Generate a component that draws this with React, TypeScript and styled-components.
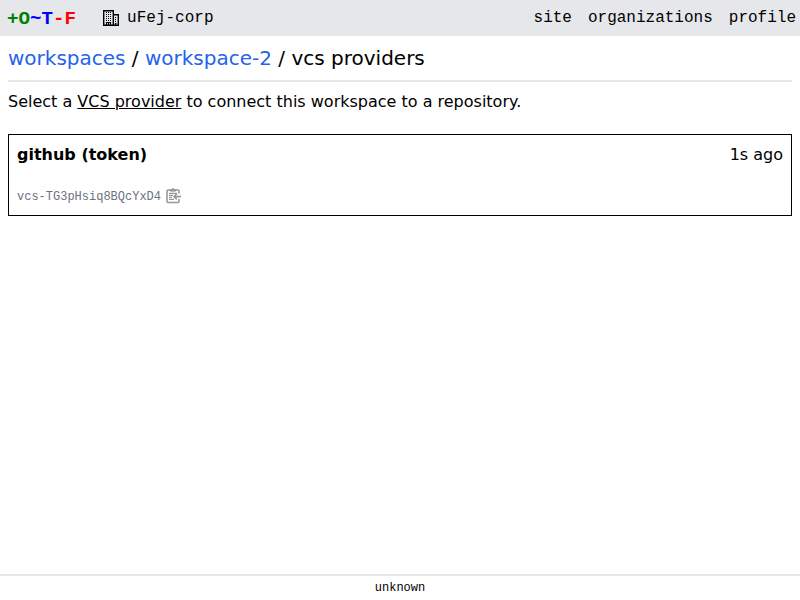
import React from "react";
import styled, { createGlobalStyle } from "styled-components";

const Global = createGlobalStyle`
  *, *::before, *::after { box-sizing: border-box; }
  body { margin: 0; background: #fff; color: #000; font-family: "DejaVu Sans", sans-serif; font-size: 16px; line-height: 24px; }
`;
const Page = styled.div`display: flex; flex-direction: column; height: 100vh;`;
const Header = styled.header`
  display: flex; align-items: center; justify-content: space-between;
  height: 36px; background: #e5e7eb; padding: 0 4px 0 7px;
  font-family: "Liberation Mono", monospace;
`;
const Left = styled.div`display: flex; align-items: center; gap: 27px;`;
const Logo = styled.a`padding-top: 2px; font-size: 19.2px; line-height: 28px; font-weight: 700;`;
const Tint = styled.span<{ $color: string }>`color: ${(p) => p.$color};`;
const Org = styled.a`display: flex; align-items: center; gap: 8px;`;
const Nav = styled.nav`display: flex; gap: 16px;`;
const Main = styled.main`display: flex; flex-direction: column; flex: 1; padding: 0 8px;`;
const Crumbs = styled.div`
  height: 46px; padding-top: 8px; border-bottom: 2px solid #e5e7eb;
  font-size: 20px; line-height: 28px;
`;
const Crumb = styled.a`color: #2563eb;`;
const Intro = styled.p`margin: 8px 0 20px;`;
const Term = styled.span`text-decoration: underline;`;
const Card = styled.article`
  display: flex; flex-direction: column; justify-content: space-between;
  height: 82px; padding: 8px; border: 1px solid #000;
`;
const Row = styled.div`display: flex; justify-content: space-between;`;
const Name = styled.span`font-weight: 600;`;
const Ident = styled.div`
  display: flex; align-items: center; gap: 4px; height: 20px;
  color: #6b7280; font: 12px/16px "Liberation Mono", monospace;
`;
const Footer = styled.footer`
  height: 26px; border-top: 2px solid #e5e7eb; padding-top: 4px; text-align: center;
  font: 12px/16px "Liberation Mono", monospace;
`;

const Building = () => (
  <svg width="16" height="16" viewBox="0 0 16 16">
    <path fill="none" stroke="#000" strokeWidth="1.4" d="M.7 15.3V.7h9.6v14.6M10.4 4.7h4.9v10.6M0 15.3h16" />
    <path fill="none" stroke="#000" strokeWidth="1.2" d="M3.5 15v-2.5h4V15M5.5 12.5V15M12.5 15v-1.5h1" />
    <path
      fill="none" stroke="#000" strokeWidth="1" strokeDasharray="1 1"
      d="M3 2.5h5M3 4.5h5M3 6.5h5M3 8.5h5M3 10.5h5M12 7.5h2M12 9.5h2M12 11.5h2"
    />
  </svg>
);
const Clipboard = () => (
  <svg width="17" height="18" viewBox="0 .7 17 18" fill="none" stroke="#999" strokeWidth="1.6" strokeLinejoin="round">
    <path d="M14 6.2V3.7q0-1-1-1H3q-1 0-1 1v10.5q0 1 1 1h10q1 0 1-1v-2.6" />
    <path fill="#999" d="M5.2 3.8V2.2h1.5l.8-.8h1.1l.8.8h1.4v1.6z" strokeWidth="1" />
    <path strokeWidth="1.1" d="M4 6.1h8M4 8.1h4M4 10.1h3M4 12.1h5" />
    <path d="M16 9.3H9M11.8 6.5 9 9.3l2.8 2.8" />
  </svg>
);

export default function App() {
  return (
    <Page>
      <Global />
      <Header>
        <Left>
          <Logo><Tint $color="green">+O</Tint><Tint $color="blue">~T</Tint><Tint $color="red">-F</Tint></Logo>
          <Org><Building />uFej-corp</Org>
        </Left>
        <Nav><a>site</a><a>organizations</a><a>profile</a></Nav>
      </Header>
      <Main>
        <Crumbs><Crumb>workspaces</Crumb> / <Crumb>workspace-2</Crumb> / vcs providers</Crumbs>
        <Intro>Select a <Term>VCS provider</Term> to connect this workspace to a repository.</Intro>
        <Card>
          <Row><Name>github (token)</Name><span>1s ago</span></Row>
          <Ident><span>vcs-TG3pHsiq8BQcYxD4</span><Clipboard /></Ident>
        </Card>
      </Main>
      <Footer>unknown</Footer>
    </Page>
  );
}
